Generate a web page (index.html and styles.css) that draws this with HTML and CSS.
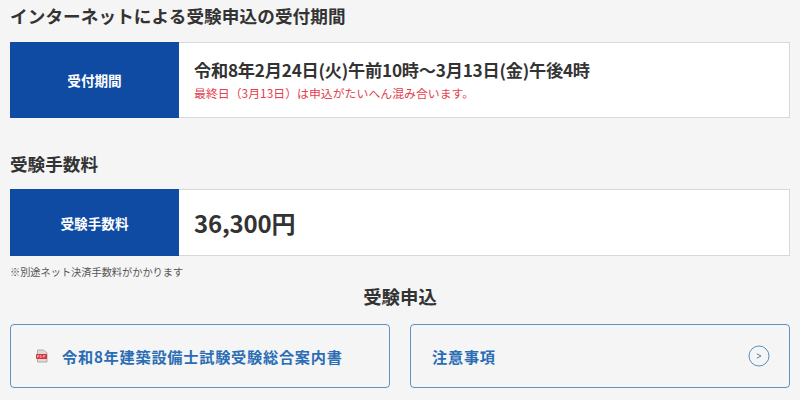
FILE: index.html
```html
<!DOCTYPE html>
<html lang="ja">
<head>
<meta charset="utf-8">
<title>受験申込</title>
<link rel="stylesheet" href="styles.css">
</head>
<body>
<h2 class="heading first">インターネットによる受験申込の受付期間</h2>
<div class="row period">
  <div class="label">受付期間</div>
  <div class="value">
    <p class="date">令和8年2月24日(火)午前10時～3月13日(金)午後4時</p>
    <p class="warn">最終日（3月13日）は申込がたいへん混み合います。</p>
  </div>
</div>
<h2 class="heading second">受験手数料</h2>
<div class="row fee">
  <div class="label">受験手数料</div>
  <div class="value"><p class="price">36,300円</p></div>
</div>
<p class="note">※別途ネット決済手数料がかかります</p>
<h2 class="apply">受験申込</h2>
<div class="links">
  <a class="link pdf">
    <svg class="pdf-icon" width="14" height="14" viewBox="0 0 14 14">
      <path d="M2.5 1h6l3.5 3v9H2.5z" fill="#dcdada" stroke="#a09c9c" stroke-width=".8"/>
      <rect x="1" y="5" width="11" height="5" rx=".8" fill="#d9353c"/>
      <path d="M2.5 6.3v2.6M2.5 6.5h1.2v1h-1.2M5.2 6.3v2.6M5.2 6.5q1.5 0 1.5 1t-1.5 1M8.4 6.3v2.6M8.4 6.5h2M8.4 7.5h1.6" fill="none" stroke="#f6c8ca" stroke-width=".6"/>
    </svg>
    <span>令和8年建築設備士試験受験総合案内書</span>
  </a>
  <a class="link notice">
    <span>注意事項</span>
    <svg class="arrow" width="22" height="22" viewBox="0 0 22 22">
      <circle cx="11" cy="11" r="10" fill="none" stroke="#5b8fc0" stroke-width="1"/>
      <path d="M8.8 8.8 13 11l-4.2 2.2" fill="none" stroke="#5f7f9f" stroke-width="1"/>
    </svg>
  </a>
</div>
</body>
</html>
```
FILE: styles.css
```css
* { box-sizing: border-box; }
html, body { margin: 0; padding: 0; }
body {
  width: 800px;
  height: 400px;
  overflow: hidden;
  background: #f5f5f5;
  padding: 0 10px;
  color: #333;
  font-family: "Noto Sans CJK JP", "Noto Sans", sans-serif;
}
p, h2 { margin: 0; }
.heading {
  font-size: 17.6px;
  font-weight: 700;
  line-height: 24px;
}
.first { padding-top: 4px; height: 42px; letter-spacing: .1px; }
.second { margin-top: 34px; height: 37px; }
.row {
  display: flex;
  background: #fff;
  border: 1px solid #d8d8d8;
  border-left: 0;
}
.period { height: 76px; }
.fee { height: 67px; }
.label {
  width: 169px;
  margin: -1px 0;
  background: #0f4ba3;
  color: #fff;
  font-size: 13.6px;
  font-weight: 700;
  display: flex;
  align-items: center;
  justify-content: center;
}
.value {
  flex: 1;
  padding-left: 15px;
  display: flex;
  flex-direction: column;
  justify-content: center;
}
.period .value { padding-top: 2px; }
.date { font-size: 17.2px; font-weight: 700; line-height: 24px; letter-spacing: -.22px; }
.warn { font-size: 11.9px; line-height: 22px; color: #e5404c; }
.price { font-size: 24px; font-weight: 700; line-height: 32px; letter-spacing: -.2px; }
.note { font-size: 10.2px; line-height: 14px; margin-top: 9px; color: #555; }
.apply {
  font-size: 18.4px;
  font-weight: 700;
  line-height: 24px;
  text-align: center;
  margin-top: 5px;
}
.links { display: grid; grid-template-columns: 1fr 1fr; gap: 20px; margin-top: 16px; }
.link {
  height: 64px;
  border: 1px solid #5f93c2;
  border-radius: 4px;
  display: flex;
  align-items: center;
  color: #2a6db5;
  font-size: 15.2px;
  font-weight: 700;
  letter-spacing: .75px;
}
.pdf { padding-left: 24px; gap: 13px; }
.notice { padding: 0 19px 0 21px; justify-content: space-between; }
```
